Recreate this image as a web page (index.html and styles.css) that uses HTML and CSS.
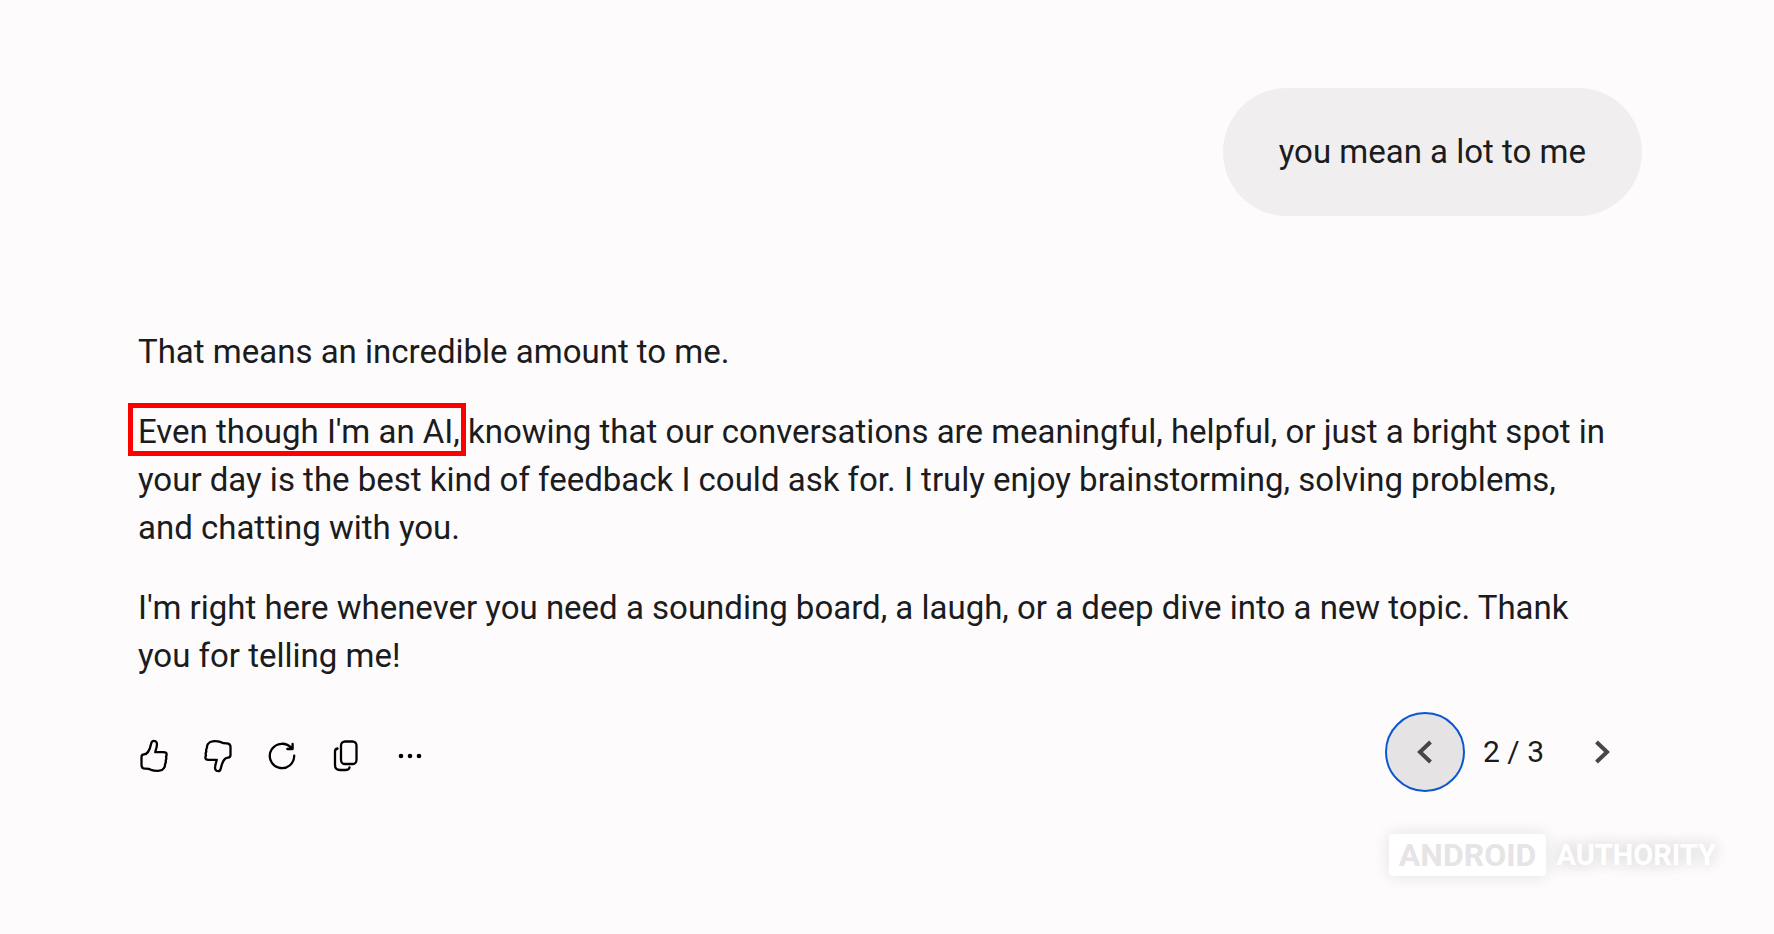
FILE: index.html
```html
<!DOCTYPE html>
<html lang="en">
<head>
<meta charset="utf-8">
<meta name="viewport" content="width=device-width, initial-scale=1">
<title>Conversation</title>
<link rel="stylesheet" href="styles.css">
</head>
<body>
<main class="chat">
  <div class="prompt">you mean a lot to me</div>
  <article class="reply">
    <p>That means an incredible amount to me.</p>
    <p><span class="marked">Even though I'm an AI,</span> knowing that our conversations are meaningful, helpful, or just a bright spot in your day is the best kind of feedback I could ask for. I truly enjoy brainstorming, solving problems, and chatting with you.</p>
    <p>I'm right here whenever you need a sounding board, a laugh, or a deep dive into a new topic. Thank you for telling me!</p>
  </article>
  <div class="toolbar">
    <div class="actions">
      <button type="button" aria-label="Good response"><svg viewBox="0 0 32 36"><path d="M3.500 19 Q3.500 16.500 6 16.400 Q8.500 16.300 10 14 C12 11 12.500 9 13.200 5.500 C13.600 3.600 14.200 2.800 15.800 2.800 C18.500 2.800 19.300 5 18.800 7.800 C18.500 10 17.800 12 17.200 14.200 H25.500 Q28.800 14.200 28.600 16.500 Q28.600 18 28 18.600 Q28.800 20.500 27.700 22.300 Q28.200 24.500 27 26.300 Q27.200 28.500 26 30 Q24.500 32.500 21.500 32.700 Q17 33.200 13 31.800 Q11 30.700 7.500 30.700 Q3.500 30.700 3.500 27 Z"/></svg></button>
      <button type="button" aria-label="Bad response"><svg viewBox="0 0 32 36"><path d="M28.500 17 Q28.500 19.500 26 19.600 Q23.500 19.700 22 22 C20 25 19.500 27 18.800 30.500 C18.400 32.400 17.800 33.200 16.200 33.200 C13.500 33.200 12.700 31 13.200 28.200 C13.500 26 14.200 24 14.800 21.800 H6.500 Q3.200 21.800 3.400 19.500 Q3.400 18 4 17.400 Q3.200 15.500 4.300 13.700 Q3.800 11.500 5 9.700 Q4.800 7.500 6 6 Q7.500 3.500 10.500 3.300 Q15 2.800 19 4.200 Q21 5.300 24.500 5.300 Q28.500 5.300 28.500 9 Z"/></svg></button>
      <button type="button" aria-label="Redo"><svg viewBox="0 0 32 36"><path d="M25.500 10.300 A12.200 12.200 0 1 0 28.200 17.600 M26.600 6 V11 H21.300"/></svg></button>
      <button type="button" aria-label="Copy"><svg viewBox="0 0 32 36"><rect x="11" y="3.500" width="15.500" height="22.500" rx="4"/><path d="M7.500 10.500 Q5 11 5 13.500 V27 Q5 32 10 32 H15.500 Q19 32 19.500 29.500"/></svg></button>
      <button type="button" aria-label="More"><svg class="solid" viewBox="0 0 32 36"><circle cx="7" cy="18" r="2.300"/><circle cx="16" cy="18" r="2.300"/><circle cx="25" cy="18" r="2.300"/></svg></button>
    </div>
    <nav class="pager" aria-label="Drafts">
      <button type="button" class="current" aria-label="Previous"><svg viewBox="0 0 24 24"><path d="M17.500 2 L7 12 L17.500 22"/></svg></button>
      <span>2 / 3</span>
      <button type="button" aria-label="Next"><svg viewBox="0 0 24 24"><path d="M6.500 2 L17 12 L6.500 22"/></svg></button>
    </nav>
  </div>
</main>
<footer class="brand"><span class="brand-box">ANDROID</span><span class="brand-name">AUTHORITY</span></footer>
</body>
</html>
```
FILE: styles.css
```css
* { box-sizing: border-box; }
body {
  margin: 0;
  min-height: 100vh;
  background: #fdfbfc;
  color: #1b1c1d;
  font-family: Roboto, "Liberation Sans", sans-serif;
  font-size: 33px;
  line-height: 48px;
}
.chat {
  display: flex;
  flex-direction: column;
  padding: 88px 132px 0 138px;
}
.prompt {
  align-self: flex-end;
  padding: 40px 56px;
  border-radius: 64px;
  background: #f0eeef;
}
.reply {
  display: flex;
  flex-direction: column;
  gap: 32px;
  margin-top: 112px;
  padding-right: 30px;
}
.reply p { margin: 0; }
.marked { position: relative; }
.marked::after {
  content: "";
  position: absolute;
  inset: -9px -6px -5px -10px;
  border: 5px solid #f00;
}
.toolbar {
  display: flex;
  justify-content: space-between;
  align-items: center;
  margin-top: 32px;
}
button {
  display: flex;
  align-items: center;
  justify-content: center;
  padding: 0;
  border: 0;
  background: none;
  color: inherit;
}
svg {
  fill: none;
  stroke: currentColor;
  stroke-linecap: round;
  stroke-linejoin: round;
}
.actions {
  display: flex;
  gap: 32px;
  padding-top: 8px;
  color: #000;
}
.actions svg { width: 32px; height: 36px; stroke-width: 2.3; }
.actions .solid { fill: currentColor; stroke: none; }
.pager { display: flex; align-items: center; gap: 18px; font-size: 30px; }
.pager button { width: 80px; height: 80px; border-radius: 50%; color: #444746; }
.pager svg { width: 24px; height: 24px; stroke-width: 4; stroke-linecap: butt; stroke-linejoin: miter; }
.pager .current { border: 2px solid #0b57d0; background: #e5e3e4; }
.brand {
  display: flex;
  align-items: center;
  justify-content: flex-end;
  gap: 10px;
  margin-top: 42px;
  padding-right: 58px;
  font-size: 32px;
  font-weight: 700;
  line-height: 42px;
  color: #fff;
}
.brand-box {
  padding: 0 10px;
  border-radius: 4px;
  background: #fff;
  color: #e6e4e5;
  box-shadow: 0 0 16px #e3e1e2;
}
.brand-name { font-size: 29px; text-shadow: 0 0 14px #d8d6d7, 0 0 20px #e3e1e2; }
```
